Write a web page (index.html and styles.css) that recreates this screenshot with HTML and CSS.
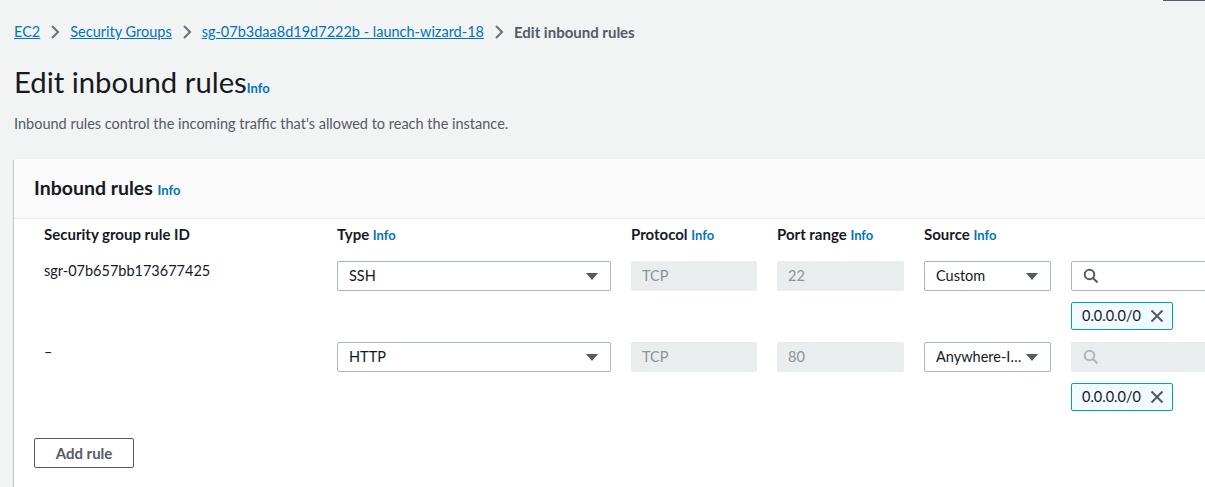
FILE: index.html
```html
<!DOCTYPE html>
<html>
<head>
<meta charset="utf-8">
<link rel="stylesheet" href="styles.css">
</head>
<body>
<div class="topbar"><div class="topbar-line"></div></div>
<div class="page">
  <nav class="crumbs">
    <a href="#">EC2</a>
    <svg class="chev" viewBox="0 0 16 16" width="16" height="16"><path d="M5 2l6 6-6 6" fill="none" stroke="#687078" stroke-width="2"/></svg>
    <a href="#">Security Groups</a>
    <svg class="chev" viewBox="0 0 16 16" width="16" height="16"><path d="M5 2l6 6-6 6" fill="none" stroke="#687078" stroke-width="2"/></svg>
    <a href="#">sg-07b3daa8d19d7222b - launch-wizard-18</a>
    <svg class="chev" viewBox="0 0 16 16" width="16" height="16"><path d="M5 2l6 6-6 6" fill="none" stroke="#687078" stroke-width="2"/></svg>
    <span class="current">Edit inbound rules</span>
  </nav>

  <h1 class="title">Edit inbound rules<a class="info" href="#">Info</a></h1>
  <p class="desc">Inbound rules control the incoming traffic that's allowed to reach the instance.</p>

  <section class="panel">
    <header class="panel-head"><h2>Inbound rules <a class="info" href="#">Info</a></h2></header>
    <div class="panel-body">
      <div class="grid">
        <div class="th">Security group rule ID</div>
        <div class="th">Type <a class="info" href="#">Info</a></div>
        <div class="th">Protocol <a class="info" href="#">Info</a></div>
        <div class="th">Port range <a class="info" href="#">Info</a></div>
        <div class="th">Source <a class="info" href="#">Info</a></div>
        <div class="th"></div>

        <div class="cell id">sgr-07b657bb173677425</div>
        <div class="cell"><div class="select"><span class="val">SSH</span><span class="caret"></span></div></div>
        <div class="cell"><div class="input disabled">TCP</div></div>
        <div class="cell"><div class="input disabled">22</div></div>
        <div class="cell"><div class="select"><span class="val">Custom</span><span class="caret"></span></div></div>
        <div class="cell stack">
          <div class="search">
            <svg viewBox="0 0 16 16" width="16" height="16"><circle cx="6.5" cy="6.5" r="4.8" fill="none" stroke="#545b64" stroke-width="2"/><path d="M10 10l4.5 4.5" stroke="#545b64" stroke-width="2"/></svg>
          </div>
          <div class="token">0.0.0.0/0<svg viewBox="0 0 16 16" width="16" height="16"><path d="M2.5 2.5l11 11M13.5 2.5l-11 11" stroke="#545b64" stroke-width="2"/></svg></div>
        </div>

        <div class="cell id">–</div>
        <div class="cell"><div class="select"><span class="val">HTTP</span><span class="caret"></span></div></div>
        <div class="cell"><div class="input disabled">TCP</div></div>
        <div class="cell"><div class="input disabled">80</div></div>
        <div class="cell"><div class="select"><span class="val">Anywhere-IPv4</span><span class="caret"></span></div></div>
        <div class="cell stack">
          <div class="search disabled">
            <svg viewBox="0 0 16 16" width="16" height="16"><circle cx="6.5" cy="6.5" r="4.8" fill="none" stroke="#aab7b8" stroke-width="2"/><path d="M10 10l4.5 4.5" stroke="#aab7b8" stroke-width="2"/></svg>
          </div>
          <div class="token">0.0.0.0/0<svg viewBox="0 0 16 16" width="16" height="16"><path d="M2.5 2.5l11 11M13.5 2.5l-11 11" stroke="#545b64" stroke-width="2"/></svg></div>
        </div>
      </div>
      <button class="btn">Add rule</button>
    </div>
  </section>
</div>
</body>
</html>
```

FILE: styles.css
```css
* { box-sizing: border-box; }
html, body { margin: 0; padding: 0; }
body {
  background: #f2f3f3;
  font-family: Lato, "Noto Sans", sans-serif;
  font-size: 14.5px;
  line-height: 20px;
  color: #16191f;
  overflow: hidden;
  width: 1205px;
  height: 487px;
}
.topbar { display: flex; justify-content: flex-end; height: 1px; }
.topbar-line { width: 42px; height: 1px; background: #545b64; }
.page { padding: 0 0 0 14px; }
.crumbs {
  display: flex;
  align-items: center;
  height: 20px;
  margin-top: 21px;
  gap: 7px;
}
.crumbs a { color: #0073bb; text-decoration: underline; }
.crumbs .current { font-weight: 700; color: #545b64; font-size: 15px; }
.title {
  margin: 22px 0 0;
  font-size: 29.3px;
  line-height: 36px;
  font-weight: 400;
  color: #16191f;
}
.info {
  font-size: 13px;
  font-weight: 700;
  color: #0073bb;
  text-decoration: none;
  line-height: 16px;
}
.desc {
  margin: 14px 0 0;
  color: #545b64;
}
.panel {
  margin: 25px -40px 0 0;
  background: #fff;
  box-shadow: 0 1px 1px 0 rgba(0,28,36,.3), 1px 1px 1px 0 rgba(0,28,36,.15), -1px 1px 1px 0 rgba(0,28,36,.15);
}
.panel-head {
  background: #fafafa;
  border-bottom: 1px solid #eaeded;
  height: 60px;
  padding: 17px 20px 0;
}
.panel-head h2 {
  margin: 0;
  font-size: 19.5px;
  line-height: 24px;
  font-weight: 700;
}
.panel-body { padding: 5px 20px 19px; }
.grid {
  display: grid;
  grid-template-columns: 273px 274px 126px 127px 127px 160px;
  column-gap: 20px;
  row-gap: 12px;
  padding-left: 10px;
}
.th { font-weight: 700; font-size: 15px; line-height: 20px; margin-bottom: 5px; }
.cell.id { color: #16191f; line-height: 20px; }
.stack { display: flex; flex-direction: column; gap: 11px; }
.select {
  display: flex;
  align-items: center;
  height: 30px;
  border: 1px solid #aab7b8;
  border-radius: 2px;
  padding: 0 12px 0 11px;
  background: #fff;
}
.select .val { flex: 1; overflow: hidden; white-space: nowrap; text-overflow: ellipsis; }
.caret {
  width: 0; height: 0;
  border-left: 6px solid transparent;
  border-right: 6px solid transparent;
  border-top: 7px solid #545b64;
  margin-left: 4px;
}
.input {
  height: 30px;
  border-radius: 2px;
  padding: 0 10px;
  display: flex;
  align-items: center;
}
.input.disabled { background: #eaeded; color: #879596; border: 1px solid #eaeded; }
.search {
  height: 30px;
  border: 1px solid #aab7b8;
  border-radius: 2px;
  display: flex;
  align-items: center;
  padding-left: 11px;
  width: 200px;
}
.search.disabled { background: #eaeded; border-color: #eaeded; }
.token {
  align-self: flex-start;
  height: 28px;
  width: 102px;
  display: flex;
  align-items: center;
  justify-content: space-between;
  padding: 0 7px 0 10px;
  background: #f1faff;
  border: 1px solid #00a1c9;
  border-radius: 2px;
}
.btn {
  margin-top: 27px;
  width: 100px;
  height: 30px;
  background: #fff;
  border: 1px solid #545b64;
  border-radius: 2px;
  font: 700 15px/20px Lato, "Noto Sans", sans-serif;
  color: #545b64;
  padding: 0;
}
```
